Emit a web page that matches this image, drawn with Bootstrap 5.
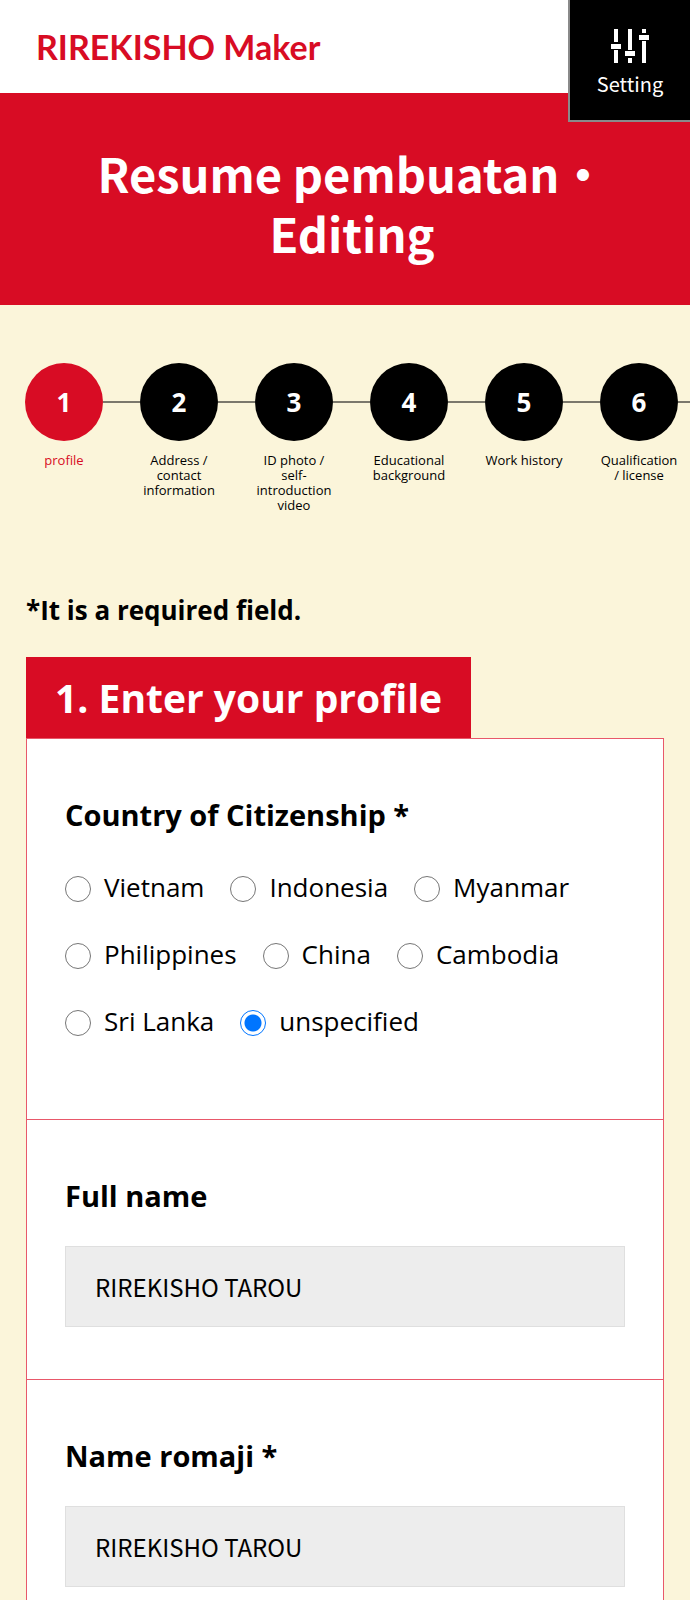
<!DOCTYPE html>
<html lang="en">
<head>
<meta charset="utf-8">
<meta name="viewport" content="width=device-width, initial-scale=1">
<title>RIREKISHO Maker</title>
<link href="https://cdn.jsdelivr.net/npm/bootstrap@5.3.0/dist/css/bootstrap.min.css" rel="stylesheet">
<style>
:root { --brand: #d80c24; --cream: #fbf5da; }
body { background: var(--cream); color: #000; font-family: "Open Sans", "Noto Sans CJK JP", sans-serif; font-size: 26px; overflow-x: hidden; }
.site-bar { height: 93px; padding: 0 36px; }
.site-logo { font: 700 34px/1 Lato, sans-serif; color: var(--brand); }
.setting-btn { width: 122px; height: 122px; background: #000; color: #fff; border: solid #8a8a8a; border-width: 0 0 2px 2px; border-radius: 0; font: 400 20px/30px "Noto Sans CJK JP", sans-serif; padding: 7px 0 0; gap: 5px; }
.hero { background: var(--brand); padding: 50px 40px 42px 54px; }
.hero h1 { font: 700 47px/60px "Noto Sans CJK JP", sans-serif; }
.step-list { padding: 58px 0 0 25px; gap: 37px; overflow: hidden; }
.step { width: 78px; position: relative; }
.step:not(:last-child)::after { content: ""; position: absolute; left: 78px; top: 38px; width: 37px; height: 2px; background: #7b786c; }
.step-dot { width: 78px; height: 78px; background: #000; color: #fff; font-weight: 700; }
.step-name { font-size: 13px; line-height: 15px; color: #000; margin-top: 12px; }
.step.current .step-dot { background: var(--brand); }
.step.current .step-name { color: var(--brand); }
.page-body { padding: 78px 26px 0; }
.required-note { line-height: 39px; margin-bottom: 27px; }
.section-tab { background: var(--brand); color: #fff; font-size: 39px; line-height: 53px; padding: 14px 29px; }
.form-block { background: #fff; border: 1px solid #e8586a; padding: 56px 38px 52px; }
.form-block + .form-block { border-top: 0; }
.block-title { font-size: 29px; line-height: 39px; font-weight: 700; margin-bottom: 31px; }
.option-row { clear: both; gap: 28px 26px; padding: 3px 0 26px; }
.option-row label { gap: 13px; line-height: 39px; }
.option-row .form-check-input { width: 26px; height: 26px; margin: 2px 0 0; border-color: #767676; float: none; }
.option-row .form-check-input:checked { background: radial-gradient(circle, #0075ff 0 8px, #fff 9px); border-color: #0075ff; }
.text-field { height: 81px; background: #ededed; border: 1px solid #dfdfdf; border-radius: 0; font: 400 24px/39px "Noto Sans CJK JP", sans-serif; color: #000; padding: 0 29px; }
</style>
</head>
<body>
<header class="position-relative">
  <div class="site-bar bg-white d-flex align-items-center">
    <a class="site-logo text-decoration-none" href="#">RIREKISHO Maker</a>
  </div>
  <button type="button" class="setting-btn btn position-absolute top-0 end-0 d-flex flex-column align-items-center justify-content-center">
    <svg width="38" height="36" viewBox="0 0 38 36" fill="#fff" aria-hidden="true">
      <path d="M3 1h4v13H3zM0 16h10v5H0zM3 22h4v13H3zM17 1h4v21h-4zM14 23h10v5H14zM17 30h4v5h-4zM31 1h4v4h-4zM28 7h10v5H28zM31 13h4v22h-4z"/>
    </svg>
    <span>Setting</span>
  </button>
</header>
<div class="hero text-center text-white">
  <h1 class="mb-0">Resume pembuatan・<br>Editing</h1>
</div>
<ol class="step-list list-unstyled d-flex mb-0">
  <li class="step flex-shrink-0 text-center current"><div class="step-dot rounded-circle d-flex align-items-center justify-content-center">1</div><div class="step-name">profile</div></li>
  <li class="step flex-shrink-0 text-center"><div class="step-dot rounded-circle d-flex align-items-center justify-content-center">2</div><div class="step-name">Address / contact information</div></li>
  <li class="step flex-shrink-0 text-center"><div class="step-dot rounded-circle d-flex align-items-center justify-content-center">3</div><div class="step-name">ID photo / self-introduction video</div></li>
  <li class="step flex-shrink-0 text-center"><div class="step-dot rounded-circle d-flex align-items-center justify-content-center">4</div><div class="step-name">Educational background</div></li>
  <li class="step flex-shrink-0 text-center"><div class="step-dot rounded-circle d-flex align-items-center justify-content-center">5</div><div class="step-name">Work history</div></li>
  <li class="step flex-shrink-0 text-center"><div class="step-dot rounded-circle d-flex align-items-center justify-content-center">6</div><div class="step-name">Qualification / license</div></li>
  <li class="step flex-shrink-0"></li>
</ol>
<main class="page-body">
  <p class="required-note fw-bold">*It is a required field.</p>
  <h2 class="section-tab d-inline-block fw-bold mb-0 align-top">1. Enter your profile</h2>
  <form>
    <fieldset class="form-block">
      <legend class="block-title">Country of Citizenship *</legend>
      <div class="option-row d-flex flex-wrap">
        <label class="d-flex align-items-center"><input class="form-check-input" type="radio" name="country"><span>Vietnam</span></label>
        <label class="d-flex align-items-center"><input class="form-check-input" type="radio" name="country"><span>Indonesia</span></label>
        <label class="d-flex align-items-center"><input class="form-check-input" type="radio" name="country"><span>Myanmar</span></label>
        <label class="d-flex align-items-center"><input class="form-check-input" type="radio" name="country"><span>Philippines</span></label>
        <label class="d-flex align-items-center"><input class="form-check-input" type="radio" name="country"><span>China</span></label>
        <label class="d-flex align-items-center"><input class="form-check-input" type="radio" name="country"><span>Cambodia</span></label>
        <label class="d-flex align-items-center"><input class="form-check-input" type="radio" name="country"><span>Sri Lanka</span></label>
        <label class="d-flex align-items-center"><input class="form-check-input" type="radio" name="country" checked><span>unspecified</span></label>
      </div>
    </fieldset>
    <div class="form-block">
      <label class="block-title d-block" for="fullName">Full name</label>
      <input class="form-control text-field" id="fullName" type="text" value="RIREKISHO TAROU">
    </div>
    <div class="form-block">
      <label class="block-title d-block" for="romajiName">Name romaji *</label>
      <input class="form-control text-field" id="romajiName" type="text" value="RIREKISHO TAROU">
    </div>
  </form>
</main>
<script src="https://cdn.jsdelivr.net/npm/bootstrap@5.3.0/dist/js/bootstrap.bundle.min.js"></script>
</body>
</html>
